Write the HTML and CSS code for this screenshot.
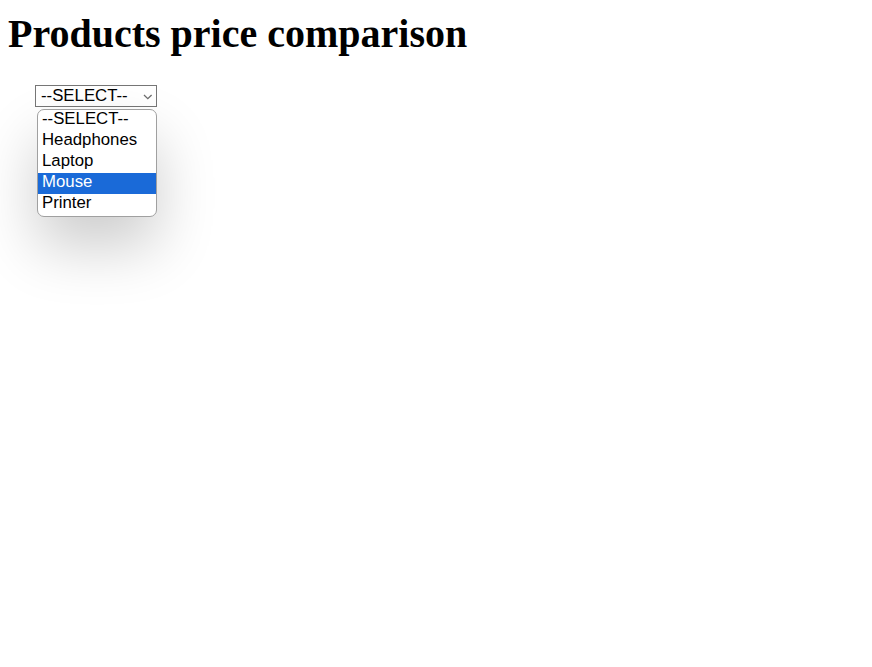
FILE: index.html
```html
<!DOCTYPE html>
<html>
<head>
<meta charset="utf-8">
<link rel="stylesheet" href="styles.css">
</head>
<body>
<h1 class="title">Products price comparison</h1>
<div class="picker">
  <div class="select-wrap">
    <div class="product-select">--SELECT--</div>
    <svg class="chevron" width="10" height="6" viewBox="0 0 10 6"><path d="M1 1 L4.8 4.6 L8.6 1" fill="none" stroke="#6d6d6d" stroke-width="1.3"/></svg>
    <div class="choice-list">
      <div class="choice">--SELECT--</div>
      <div class="choice">Headphones</div>
      <div class="choice">Laptop</div>
      <div class="choice current">Mouse</div>
      <div class="choice">Printer</div>
    </div>
  </div>
</div>
</body>
</html>
```

FILE: styles.css
```css
html {
  background: #fff;
  height: 100%;
}
body {
  box-sizing: border-box;
  margin: 0;
  padding: 8px;
  min-height: 100%;
  font-family: "Liberation Serif", "Times New Roman", serif;
  color: #000;
  background: #fff;
}
.title {
  font-size: 40px;
  font-weight: bold;
  margin: 4px 0 0 0;
  line-height: 44px;
}
.picker {
  padding-top: 29px;
  padding-left: 27px;
}
.select-wrap {
  position: relative;
  width: 122px;
  height: 22px;
}
.product-select {
  box-sizing: border-box;
  width: 122px;
  height: 22px;
  font-family: "Liberation Sans", Arial, sans-serif;
  font-size: 16.8px;
  line-height: 20px;
  color: #000;
  background: #fff;
  border: 1px solid #767676;
  padding: 0 0 0 5px;
}
.chevron {
  position: absolute;
  left: 108px;
  top: 9px;
}
.choice-list {
  position: absolute;
  z-index: 5;
  left: 2px;
  top: 24px;
  width: 120px;
  height: 108px;
  box-sizing: border-box;
  padding: 0 0 1px 0;
  background-color: #ffffff;
  border: 1px solid #a0a0a0;
  border-radius: 7px;
  box-shadow: 0 30px 60px rgba(0, 0, 0, 0.2);
  font-family: "Liberation Sans", Arial, sans-serif;
  font-size: 16.8px;
  overflow: hidden;
}
.choice {
  height: 21px;
  line-height: 18px;
  padding-left: 4px;
  color: #000;
  white-space: nowrap;
}
.choice.current {
  background-color: #1a6ad8;
  color: #fff;
}
```
